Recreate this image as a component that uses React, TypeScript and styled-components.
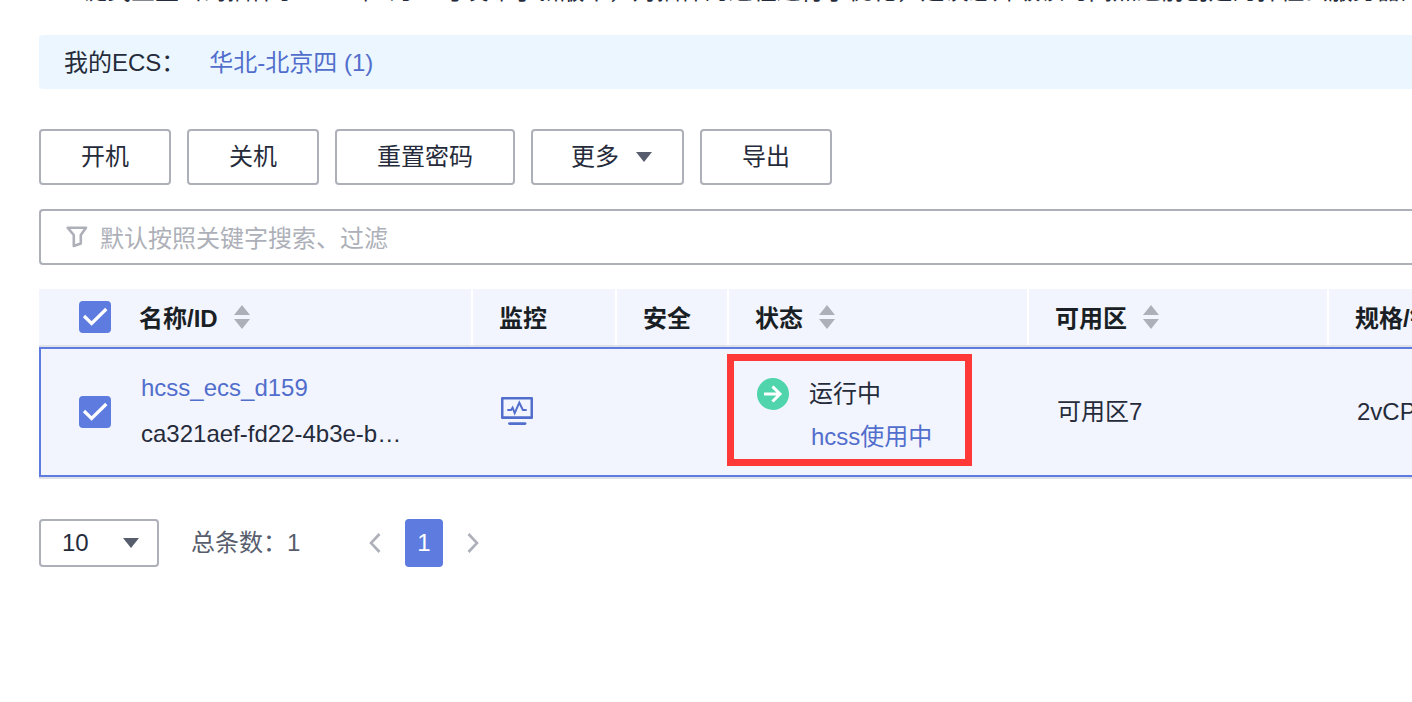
import React, { useState } from "react";
import styled, { createGlobalStyle } from "styled-components";

const color = {
  text: "#252b3a",
  heading: "#191f24",
  muted: "#575d6c",
  grey: "#adb0b8",
  link: "#526ecc",
  primary: "#5e7ce0",
  tint: "#f2f5fe",
  line: "#dfe1e6",
  banner: "#ebf6ff",
  green: "#50d4ab",
  red: "#ff3838",
};

const GlobalStyle = createGlobalStyle`
  *, *::before, *::after { box-sizing: border-box; }
  body {
    margin: 0;
    background: #fff;
    color: ${color.text};
    overflow-x: hidden;
  }
  body, button, input, select {
    font-family: "Liberation Sans", "Noto Sans CJK SC", sans-serif;
    font-size: 24px;
    line-height: 32px;
  }
  button, input, select { color: inherit; margin: 0; }
  svg { display: block; flex: none; }
`;

const Page = styled.main`
  padding-left: 39px;
  overflow: hidden;
`;

/* Last line of the notice, scrolled almost out of view */
const Notice = styled.div`
  display: flex;
  align-items: flex-end;
  height: 3px;
  margin-bottom: 32px;
  padding-left: 20px;
  overflow: hidden;
  line-height: 24px;
  white-space: nowrap;
`;

const Banner = styled.section`
  display: flex;
  align-items: center;
  gap: 24px;
  padding: 12px 25px 10px;
  border-radius: 4px 0 0 4px;
  background: ${color.banner};
`;

const Link = styled.a`
  color: ${color.link};
  text-decoration: none;
`;

const Toolbar = styled.div`
  display: flex;
  gap: 16px;
  margin: 40px 0 24px;
`;

const ToolButton = styled.button<{ $menu?: boolean }>`
  display: flex;
  align-items: center;
  gap: 17px;
  padding: ${(p) => (p.$menu ? "10px 30px 10px 38px" : "10px 40px")};
  border: 2px solid ${color.grey};
  border-radius: 4px;
  background: #fff;
  white-space: nowrap;
  cursor: pointer;
`;

const SearchBox = styled.label`
  display: flex;
  align-items: center;
  gap: 12px;
  margin-bottom: 24px;
  padding: 8px 25px;
  border: 2px solid ${color.grey};
  border-right: 0;
  border-radius: 4px 0 0 4px;
`;

const SearchInput = styled.input`
  flex: 1;
  height: 36px;
  padding: 4px 0 0;
  border: 0;
  outline: 0;
  background: none;
  &::placeholder { color: ${color.grey}; opacity: 1; }
`;

const Table = styled.table`
  width: 100%;
  table-layout: fixed;
  border-spacing: 0;
  border-bottom: 2px solid ${color.line};
  background: ${color.tint};
  white-space: nowrap;
`;

const HeadRow = styled.tr`
  background: linear-gradient(${color.line}, ${color.line}) bottom / 100% 2px no-repeat;
`;

const Th = styled.th`
  padding: 10px 0 12px 26px;
  background: linear-gradient(#fff, #fff) right top / 2px calc(100% - 2px) no-repeat;
  color: ${color.heading};
  font-weight: bold;
  text-align: left;
  &:first-child { padding-left: 40px; }
  &:last-child { background: none; }
`;

const HeadLabel = styled.span`
  display: block;
  padding-top: 4px;
`;

const Td = styled.td`
  position: relative;
  height: 130px;
  padding: 0 0 0 28px;
  border: solid ${color.primary};
  border-width: 2px 0;
  vertical-align: middle;
  &:first-child {
    padding-left: 38px;
    border-left-width: 2px;
  }
`;

const HeadContent = styled.div`
  display: flex;
  align-items: center;
  gap: 16px;
`;

const NameContent = styled.div<{ $gap: number }>`
  display: flex;
  align-items: center;
  gap: ${(p) => p.$gap}px;
`;

const CheckWrap = styled.label`
  display: grid;
  width: 32px;
  height: 32px;
  > * { grid-area: 1 / 1; }
  > svg { pointer-events: none; visibility: hidden; }
  > input:checked + svg { visibility: visible; }
`;

const CheckInput = styled.input`
  appearance: none;
  width: 32px;
  height: 32px;
  border: 2px solid ${color.grey};
  border-radius: 4px;
  background: #fff;
  cursor: pointer;
  &:checked {
    border-color: ${color.primary};
    background: ${color.primary};
  }
`;

const SortButton = styled.button`
  padding: 0;
  border: 0;
  background: none;
  cursor: pointer;
`;

const Stack = styled.div`
  display: flex;
  flex-direction: column;
  padding-bottom: 2px;
  line-height: 46px;
`;

const StatusContent = styled.div`
  display: grid;
  grid-template-columns: 32px auto;
  column-gap: 20px;
  align-items: center;
  justify-content: start;
  padding-top: 6px;
  line-height: 43px;
  > a { grid-column: 2; padding-left: 2px; }
`;

const Highlight = styled.div`
  position: absolute;
  top: 5px;
  left: -2px;
  width: 245px;
  height: 112px;
  border: 7px solid ${color.red};
  pointer-events: none;
`;

const Footer = styled.footer`
  display: flex;
  align-items: center;
  gap: 32px;
  margin: 40px 0;
  color: ${color.muted};
`;

const SizeWrap = styled.label`
  position: relative;
  color: ${color.text};
  > svg {
    position: absolute;
    top: 19px;
    right: 20px;
    pointer-events: none;
  }
`;

const SizeSelect = styled.select`
  display: block;
  appearance: none;
  width: 120px;
  height: 48px;
  padding: 0 21px;
  border: 2px solid ${color.grey};
  border-radius: 4px;
  background: #fff;
`;

const Pager = styled.nav`
  display: flex;
  align-items: center;
  gap: 24px;
  margin-left: 37px;
`;

const PageArrow = styled.button`
  padding: 0;
  border: 0;
  background: none;
  cursor: pointer;
`;

const PageNumber = styled.button`
  padding: 8px 12px;
  border: 0;
  border-radius: 4px;
  background: ${color.primary};
  color: #fff;
`;

const Caret = () => (
  <svg width="16" height="10" viewBox="0 0 16 10" aria-hidden="true">
    <path d="M0 0h16L8 10z" fill={color.muted} />
  </svg>
);

const SortIcon = () => (
  <svg width="16" height="24" viewBox="0 0 16 24" aria-hidden="true">
    <path d="M8 0l8 10H0zM0 14h16L8 24z" fill={color.grey} />
  </svg>
);

const Chevron = ({ d }: { d: string }) => (
  <svg width="12" height="20" viewBox="0 0 12 20" fill="none" stroke={color.grey} strokeWidth="2.6" aria-hidden="true">
    <path d={d} />
  </svg>
);

const FilterIcon = () => (
  <svg width="22" height="22" viewBox="0 0 22 22" fill="none" stroke={color.grey} strokeWidth="2.6" strokeLinejoin="round" aria-hidden="true">
    <path d="M1.8 1.8h18.2l-5.200 7.200v8.500l-7 2.500V9z" />
  </svg>
);

const MonitorIcon = () => (
  <svg width="32" height="30" viewBox="0 0 32 30" fill="none" stroke={color.link} aria-hidden="true">
    <path d="M1.200 1.300h29.600v19.300H1.200z" strokeWidth="2.600" strokeLinejoin="round" />
    <path d="M8.500 26.600h15.500" strokeWidth="2.800" strokeLinecap="round" />
    <path d="M6.300 13h3.700l1.600-2.300 2.100 5.500 4.600-10.500 3.600 7.300h3.800" strokeWidth="2" />
  </svg>
);

const RunningIcon = () => (
  <svg width="32" height="32" viewBox="0 0 32 32" aria-hidden="true">
    <circle cx="16" cy="16" r="16" fill={color.green} />
    <path d="M7 16h16M15.500 8.500l7.500 7.500-7.500 7.500" fill="none" stroke="#fff" strokeWidth="3" />
  </svg>
);

interface CheckProps {
  label: string;
  checked: boolean;
  onChange: (value: boolean) => void;
}

const Check = ({ label, checked, onChange }: CheckProps) => (
  <CheckWrap>
    <CheckInput type="checkbox" aria-label={label} checked={checked} onChange={(e) => onChange(e.target.checked)} />
    <svg width="32" height="32" viewBox="0 0 32 32" aria-hidden="true">
      <path d="M5 15l7.600 7.500L27.300 8" fill="none" stroke="#fff" strokeWidth="3.200" />
    </svg>
  </CheckWrap>
);

const SortableLabel = ({ text, sortLabel }: { text: string; sortLabel: string }) => (
  <HeadContent>
    <HeadLabel>{text}</HeadLabel>
    <SortButton type="button" aria-label={sortLabel}>
      <SortIcon />
    </SortButton>
  </HeadContent>
);

export default function App() {
  const [selected, setSelected] = useState(true);

  return (
    <>
      <GlobalStyle />
      <Page>
        <Notice>
          一键式重置密码插件于2023年5月18号发布了新版本，对插件的过程进行了优化，建议您升级该时间点之前创建的弹性云服务器的插件
        </Notice>

        <Banner>
          <span>我的ECS：</span>
          <Link href="#region">华北-北京四 (1)</Link>
        </Banner>

        <Toolbar>
          <ToolButton type="button">开机</ToolButton>
          <ToolButton type="button">关机</ToolButton>
          <ToolButton type="button">重置密码</ToolButton>
          <ToolButton type="button" $menu>
            更多
            <Caret />
          </ToolButton>
          <ToolButton type="button">导出</ToolButton>
        </Toolbar>

        <SearchBox>
          <FilterIcon />
          <SearchInput type="text" aria-label="搜索" placeholder="默认按照关键字搜索、过滤" />
        </SearchBox>

        <Table>
          <colgroup>
            <col style={{ width: 434 }} />
            <col style={{ width: 144 }} />
            <col style={{ width: 112 }} />
            <col style={{ width: 300 }} />
            <col style={{ width: 300 }} />
            <col />
          </colgroup>
          <thead>
            <HeadRow>
              <Th>
                <NameContent $gap={28}>
                  <Check label="全选" checked={selected} onChange={setSelected} />
                  <SortableLabel text="名称/ID" sortLabel="名称排序" />
                </NameContent>
              </Th>
              <Th>
                <HeadLabel>监控</HeadLabel>
              </Th>
              <Th>
                <HeadLabel>安全</HeadLabel>
              </Th>
              <Th>
                <SortableLabel text="状态" sortLabel="状态排序" />
              </Th>
              <Th>
                <SortableLabel text="可用区" sortLabel="可用区排序" />
              </Th>
              <Th>
                <HeadLabel>规格/镜像</HeadLabel>
              </Th>
            </HeadRow>
          </thead>
          <tbody>
            <tr>
              <Td>
                <NameContent $gap={30}>
                  <Check label="选择 hcss_ecs_d159" checked={selected} onChange={setSelected} />
                  <Stack>
                    <Link href="#server">hcss_ecs_d159</Link>
                    <span>ca321aef-fd22-4b3e-b…</span>
                  </Stack>
                </NameContent>
              </Td>
              <Td>
                <Link href="#monitor" aria-label="监控">
                  <MonitorIcon />
                </Link>
              </Td>
              <Td />
              <Td>
                <StatusContent>
                  <RunningIcon />
                  <span>运行中</span>
                  <Link href="#hcss">hcss使用中</Link>
                </StatusContent>
                <Highlight />
              </Td>
              <Td>可用区7</Td>
              <Td>2vCPUs</Td>
            </tr>
          </tbody>
        </Table>

        <Footer>
          <SizeWrap>
            <SizeSelect aria-label="每页条数" defaultValue="10">
              <option>10</option>
              <option>20</option>
              <option>50</option>
            </SizeSelect>
            <Caret />
          </SizeWrap>
          <span>总条数：1</span>
          <Pager aria-label="分页">
            <PageArrow type="button" aria-label="上一页">
              <Chevron d="M10.500 1L2 10l8.500 9" />
            </PageArrow>
            <PageNumber type="button">1</PageNumber>
            <PageArrow type="button" aria-label="下一页">
              <Chevron d="M1.500 1L10 10l-8.500 9" />
            </PageArrow>
          </Pager>
        </Footer>
      </Page>
    </>
  );
}
